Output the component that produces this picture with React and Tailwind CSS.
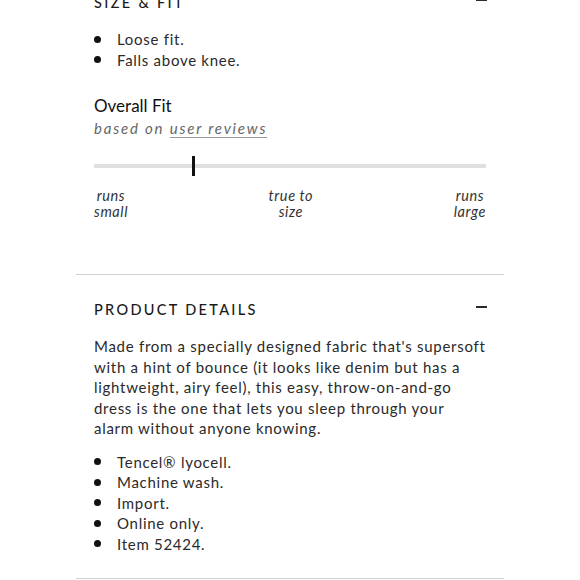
const font = { fontFamily: "Lato, 'Noto Sans', sans-serif" };

const Minus = () => (
  <span className="block h-[2px] w-[11px] bg-[#2a2a2a]" />
);

const Bullets = ({ items }) => (
  <ul className="text-[15px] leading-[20.5px] tracking-[0.048em] text-[#2a2a2a]">
    {items.map((item) => (
      <li key={item} className="flex items-center">
        <span className="mr-[16px] h-[7px] w-[7px] rounded-full bg-[#111]" />
        <span>{item}</span>
      </li>
    ))}
  </ul>
);

const SectionHeader = ({ title }) => (
  <div className="flex h-[20px] items-center justify-between">
    <h3 className="text-[14.5px] font-medium tracking-[0.16em] text-[#1a1a1a]">{title}</h3>
    <span className="-mt-[7px] mr-[-1px]">
      <Minus />
    </span>
  </div>
);

export default function App() {
  return (
    <div className="min-h-[580px] w-full overflow-hidden bg-white" style={font}>
      <div className="mx-auto w-[428px]">
        {/* size & fit */}
        <section className="px-[18px] pb-[54px]">
          <div className="-mt-[7px]">
            <SectionHeader title="SIZE & FIT" />
          </div>
          <div className="mt-[16px]">
            <Bullets items={["Loose fit.", "Falls above knee."]} />
          </div>
          <div className="mt-[25px] text-[17px] leading-[22px] text-[#111]">Overall Fit</div>
          <div className="mt-px text-[15px] italic leading-[20px] tracking-[0.12em] text-[#666]">
            based on <span className="underline decoration-[#999] underline-offset-[3px]">user reviews</span>
          </div>
          <div className="relative mt-[18px] flex h-[20px] items-center">
            <div className="h-[4px] w-full bg-[#e0e0e0]" />
            <div className="absolute left-[98px] top-0 h-[20px] w-[3px] bg-[#111]" />
          </div>
          <div className="mt-[12px] flex justify-between text-[14.5px] italic leading-[16px] tracking-[0.04em] text-[#333]">
            <div className="text-center">runs<br />small</div>
            <div className="text-center">true to<br />size</div>
            <div className="text-center">runs<br />large</div>
          </div>
        </section>

        {/* product details */}
        <section className="border-t border-[#cfcfcf] px-[18px] pt-[25px] pb-[24px]">
          <SectionHeader title="PRODUCT DETAILS" />
          <p className="mt-[16px] text-[15px] leading-[20.5px] tracking-[0.048em] text-[#2a2a2a]">
            Made from a specially designed fabric that's supersoft with a hint of bounce (it looks like
            denim but has a lightweight, airy feel), this easy, throw-on-and-go dress is the one that
            lets you sleep through your alarm without anyone knowing.
          </p>
          <div className="mt-[13px]">
            <Bullets items={["Tencel® lyocell.", "Machine wash.", "Import.", "Online only.", "Item 52424."]} />
          </div>
        </section>
        <div className="border-t border-[#cfcfcf]" />
      </div>
    </div>
  );
}
